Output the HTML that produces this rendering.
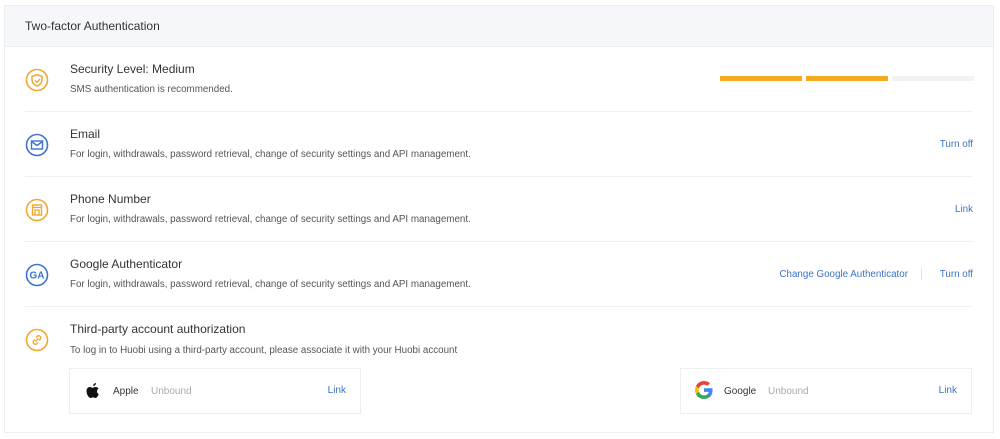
<!DOCTYPE html>
<html><head><style>
body{margin:0;background:#fff;font-family:"Liberation Sans",Arial,sans-serif;width:1000px;height:439px;overflow:hidden;position:relative}
.card{position:absolute;left:4px;top:5px;width:988px;height:426px;border:1px solid #eceef2;background:#fff}
.hdr{height:40px;background:#f5f7fa;border-bottom:1px solid #eceef2;font-size:12px;color:#333;line-height:41px;padding-left:20px}
.row{position:absolute;left:20px;right:20px;border-bottom:1px solid #eef0f3;height:64px}
.icon{position:absolute;left:0;top:21px;width:24px;height:24px}
.t{position:absolute;left:45px;top:15px;font-size:12px;color:#333}
.d{position:absolute;left:45px;top:37px;font-size:9.8px;color:#555}
.a{position:absolute;right:0;top:27px;font-size:9.8px;color:#3c73c6}
.box{position:absolute;top:362px;width:290px;height:44px;border:1px solid #eceef2;font-size:10px}
</style></head><body>
<div class="card">
<div class="hdr">Two-factor Authentication</div>
<div class="row" style="top:41px">
<svg class="icon" viewBox="0 0 24 24"><circle cx="12" cy="12" r="10.5" fill="none" stroke="#f0a830" stroke-width="1.6"/><path d="M12 6.5l5 2v3.5c0 3-2.5 5-5 6-2.5-1-5-3-5-6V8.5z" fill="none" stroke="#f0a830" stroke-width="1.5"/><path d="M10 12.5l2 2 3-3.5" fill="none" stroke="#f0a830" stroke-width="1.4"/></svg>
<div class="t">Security Level: Medium</div><div class="d">SMS authentication is recommended.</div>
<div style="position:absolute;left:695px;top:29px;width:82px;height:5px;background:#f5a91c"></div>
<div style="position:absolute;left:781px;top:29px;width:82px;height:5px;background:#f5a91c"></div>
<div style="position:absolute;left:867px;top:29px;width:82px;height:5px;background:#f1f2f4"></div>
</div>
<div class="row" style="top:106px">
<svg class="icon" viewBox="0 0 24 24"><circle cx="12" cy="12" r="10.5" fill="none" stroke="#3b74cf" stroke-width="1.6"/><rect x="6.5" y="8" width="11" height="8" fill="none" stroke="#3b74cf" stroke-width="1.4"/><path d="M6.5 8.5l5.5 4 5.5-4" fill="none" stroke="#3b74cf" stroke-width="1.4"/></svg>
<div class="t">Email</div><div class="d">For login, withdrawals, password retrieval, change of security settings and API management.</div><div class="a">Turn off</div></div>
<div class="row" style="top:171px">
<svg class="icon" viewBox="0 0 24 24"><circle cx="12" cy="12" r="10.5" fill="none" stroke="#f0a830" stroke-width="1.6"/><rect x="7.5" y="7" width="9" height="10" fill="none" stroke="#f0a830" stroke-width="1.4"/><path d="M7.5 9.5h9M10 17v-5h4v5" fill="none" stroke="#f0a830" stroke-width="1.3"/></svg>
<div class="t">Phone Number</div><div class="d">For login, withdrawals, password retrieval, change of security settings and API management.</div><div class="a">Link</div></div>
<div class="row" style="top:236px">
<svg class="icon" viewBox="0 0 24 24"><circle cx="12" cy="12" r="10.5" fill="none" stroke="#3b74cf" stroke-width="1.6"/><text x="12" y="15.5" text-anchor="middle" font-size="10" font-weight="bold" fill="#3b74cf" font-family="Liberation Sans">GA</text></svg>
<div class="t">Google Authenticator</div><div class="d">For login, withdrawals, password retrieval, change of security settings and API management.</div>
<div class="a" style="right:65px">Change Google Authenticator</div><div style="position:absolute;right:51px;top:26px;width:1px;height:12px;background:#e2e4e8"></div><div class="a">Turn off</div></div>
<div class="row" style="top:301px;border:none">
<svg class="icon" viewBox="0 0 24 24"><circle cx="12" cy="12" r="10.5" fill="none" stroke="#f0a830" stroke-width="1.6"/><path d="M10.5 13.5l3-3M11 9.5l1.5-1.5a2.2 2.2 0 013 3L14 12.5M13 14.5l-1.5 1.5a2.2 2.2 0 01-3-3L10 11.5" fill="none" stroke="#f0a830" stroke-width="1.4"/></svg>
<div class="t">Third-party account authorization</div><div class="d" style="top:38px">To log in to Huobi using a third-party account, please associate it with your Huobi account</div></div>
<div class="box" style="left:64px">
<svg style="position:absolute;left:15px;top:13px" width="16" height="18" viewBox="0 0 16 18"><path d="M11 1c0 1.5-1.2 3-2.8 3C8 2.5 9.4 1.1 11 1zM13.5 12.5c-.6 1.5-1.6 3.5-3 3.5-1 0-1.3-.6-2.5-.6s-1.6.6-2.5.6C4 16 1.5 12.5 1.5 9 1.5 6.5 3.2 5 4.8 5c1.1 0 1.9.7 2.8.7.8 0 1.6-.7 3-.7 1 0 2.2.5 3 1.6-2.5 1.4-2 5 .9 5.9z" fill="#111"/></svg>
<span style="position:absolute;left:43px;top:17px;color:#333">Apple</span><span style="position:absolute;left:81px;top:17px;color:#aaa">Unbound</span><span style="position:absolute;right:14px;top:16px;color:#3c73c6">Link</span></div>
<div class="box" style="left:675px">
<svg style="position:absolute;left:13px;top:11px" width="20" height="20" viewBox="0 0 20 20"><path d="M18.6 10.2c0-.7-.1-1.3-.2-1.9H10v3.6h4.8c-.2 1.1-.9 2.1-1.8 2.7v2.3h3c1.7-1.6 2.6-3.9 2.6-6.7z" fill="#4285f4"/><path d="M10 19c2.4 0 4.5-.8 6-2.2l-3-2.3c-.8.6-1.8.9-3 .9-2.3 0-4.3-1.6-5-3.7H2v2.4C3.5 17 6.5 19 10 19z" fill="#34a853"/><path d="M5 11.7c-.2-.6-.3-1.1-.3-1.7s.1-1.2.3-1.7V5.9H2C1.4 7.1 1 8.5 1 10s.4 2.9 1 4.1z" fill="#fbbc05"/><path d="M10 4.6c1.3 0 2.5.5 3.4 1.3l2.6-2.6C14.5 1.9 12.4 1 10 1 6.5 1 3.5 3 2 5.9l3 2.4c.7-2.1 2.7-3.7 5-3.7z" fill="#ea4335"/></svg>
<span style="position:absolute;left:43px;top:17px;color:#333">Google</span><span style="position:absolute;left:87px;top:17px;color:#aaa">Unbound</span><span style="position:absolute;right:14px;top:16px;color:#3c73c6">Link</span></div>
</div>
</body></html>
